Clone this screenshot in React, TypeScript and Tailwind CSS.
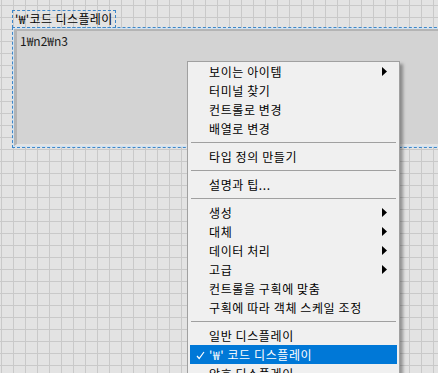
type MenuEntry =
  | { kind: 'item'; label: string; submenu?: boolean; checked?: boolean; active?: boolean }
  | { kind: 'sep' };

const MENU: MenuEntry[] = [
  { kind: 'item', label: '보이는 아이템', submenu: true },
  { kind: 'item', label: '터미널 찾기' },
  { kind: 'item', label: '컨트롤로 변경' },
  { kind: 'item', label: '배열로 변경' },
  { kind: 'sep' },
  { kind: 'item', label: '타입 정의 만들기' },
  { kind: 'sep' },
  { kind: 'item', label: '설명과 팁...' },
  { kind: 'sep' },
  { kind: 'item', label: '생성', submenu: true },
  { kind: 'item', label: '대체', submenu: true },
  { kind: 'item', label: '데이터 처리', submenu: true },
  { kind: 'item', label: '고급', submenu: true },
  { kind: 'item', label: '컨트롤을 구획에 맞춤' },
  { kind: 'item', label: '구획에 따라 객체 스케일 조정' },
  { kind: 'sep' },
  { kind: 'item', label: '일반 디스플레이' },
  { kind: 'item', label: "'₩' 코드 디스플레이", checked: true, active: true },
  { kind: 'item', label: '암호 디스플레이' },
  { kind: 'item', label: '16진수 디스플레이' },
];

const FONT = "font-['Malgun_Gothic','Noto_Sans_CJK_KR','Noto_Sans',sans-serif]";

function Arrow() {
  return (
    <svg width="5" height="9" viewBox="0 0 5 9" className="absolute right-[10px] top-[5px]" aria-hidden>
      <path d="M0 0 L5 4.5 L0 9 Z" fill="#000" />
    </svg>
  );
}

function Check() {
  return (
    <svg width="9" height="9" viewBox="0 0 9 9" className="absolute left-[6px] top-[6px]" aria-hidden>
      <path d="M1 5 L3.2 7.5 L8 1" fill="none" stroke="#fff" strokeWidth="1.2" />
    </svg>
  );
}

function ContextMenu() {
  return (
    <div className="absolute left-[187px] top-[61px] w-[213px] border border-[#a0a0a0] bg-[#f0f0f0] shadow-[3px_3px_3px_rgba(0,0,0,0.35)]">
      {MENU.map((m, i) =>
        m.kind === 'sep' ? (
          <div key={i} className="h-[9px] flex items-center px-[3px]">
            <div className="h-px w-full bg-[#a0a0a0]" />
          </div>
        ) : (
          <div
            key={i}
            className={
              'relative h-[19px] mx-[2px] flex items-center pl-[19px] text-[12px] leading-none whitespace-nowrap tracking-[0.6px] ' +
              (m.active ? 'bg-[#0078d7] text-white' : 'text-black')
            }
          >
            {m.checked && <Check />}
            {m.label}
            {m.submenu && <Arrow />}
          </div>
        )
      )}
    </div>
  );
}

export default function App() {
  return (
    <div
      className={`relative w-[438px] h-[373px] overflow-hidden bg-[#e3e3e3] bg-[linear-gradient(to_right,#c9c9c9_1px,transparent_1px),linear-gradient(to_bottom,#c9c9c9_1px,transparent_1px)] bg-[size:12px_12px] bg-[position:1px_5px] ${FONT}`}
    >
      <div className="pt-[10px] pl-[12px] flex flex-col items-start">
        {/* label */}
        <div className="h-[18px] border border-dashed border-[#3d87c9] pl-[2px] pr-[2px] flex items-center text-[12px] leading-none text-black tracking-[0.4px]">
          '₩'코드 디스플레이
        </div>

        {/* string display */}
        <div className="w-[440px] h-[121px] border border-dashed border-[#3d87c9] border-r-0 -mt-px">
          <div className="h-full border border-[#cfe2f3] border-r-0">
            <div className="h-full border-t-[2px] border-l-[3px] border-b-[2px] border-t-[#b4b4b4] border-l-[#b4b4b4] border-b-[#e4e4e4] bg-[#d3d3d3]">
              <div className="pl-[3px] pt-[3px] text-[12px] leading-[14px] text-[#1a1a1a]">1₩n2₩n3</div>
            </div>
          </div>
        </div>
      </div>

      <ContextMenu />
    </div>
  );
}
